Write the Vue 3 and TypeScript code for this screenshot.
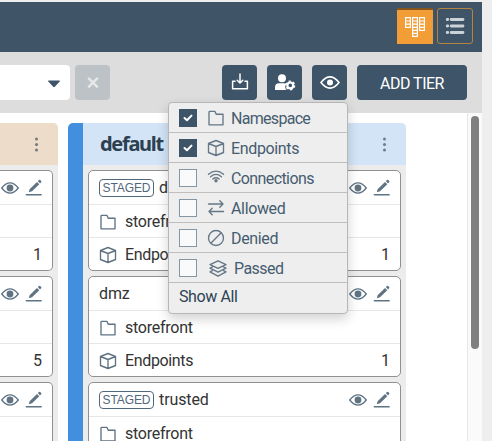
<script setup lang="ts">
import { h, type FunctionalComponent } from 'vue'

type IconName = 'folder' | 'cube' | 'wifi' | 'swap' | 'denied' | 'layers' | 'eye' | 'pencil'

interface Shape {
  d: string
  solid?: boolean
}

const shapes: Record<IconName, Shape[]> = {
  folder: [{ d: 'M2 3.2V15.8H16V5.2H9.2L8 2.4H2.8Q2 2.4 2 3.2Z' }],
  cube: [{ d: 'M9 1.5L16.5 4.5V13.5L9 16.5L1.5 13.5V4.5ZM1.5 4.5L9 7.5L16.5 4.5M9 7.5V16.5' }],
  wifi: [
    { d: 'M1.5 5.3Q9 -1 16.5 5.3M3.6 7.7Q9 3.1 14.4 7.7M5.9 10.1Q9 7.5 12.1 10.1' },
    { d: 'M9 10a1.7 1.7 0 1 1 0 3.4a1.7 1.7 0 1 1 0-3.4Z', solid: true },
  ],
  swap: [{ d: 'M1.5 5H16M12.8 1.7L16 5L12.8 8.3M16.5 12.5H2M5.2 9.3L2 12.5L5.2 15.8' }],
  denied: [{ d: 'M9 1.5a7.5 7.5 0 1 1 0 15a7.5 7.5 0 1 1 0-15ZM3.8 14.2L14.2 3.8' }],
  layers: [
    { d: 'M9 1.8L17 5.6L9 9.4L1 5.6ZM3.4 8L1 9.2L9 13.2L17 9.2L14.6 8M3.4 11.7L1 12.9L9 17.2L17 12.9L14.6 11.7' },
  ],
  eye: [
    { d: 'M0.7 9Q9 -1.2 17.3 9Q9 19.2 0.7 9Z' },
    { d: 'M9 5.6a3.4 3.4 0 1 1 0 6.8a3.4 3.4 0 1 1 0-6.8Z', solid: true },
  ],
  pencil: [
    { d: 'M4.6 10.2L12 2.9L14.3 5.2L7 12.3L3.8 13.3ZM12.8 2.1L14 0.9Q14.6 0.4 15.2 1L16.2 2Q16.7 2.6 16.1 3.2L15 4.4Z', solid: true },
    { d: 'M1.3 15.7H16.2' },
  ],
}

const Glyph: FunctionalComponent<{ name: IconName }> = (props) =>
  h(
    'svg',
    { viewBox: '0 0 18 18', width: 18, height: 18 },
    shapes[props.name].map((s) =>
      h('path', {
        d: s.d,
        fill: s.solid ? 'currentColor' : 'none',
        stroke: s.solid ? 'none' : 'currentColor',
        'stroke-width': 1.35,
        'stroke-linejoin': 'round',
        'stroke-linecap': 'round',
      }),
    ),
  )
Glyph.props = ['name']

interface Policy {
  name: string
  staged: boolean
  count: number
}

const policies: Policy[] = [
  { name: 'dmz', staged: true, count: 1 },
  { name: 'dmz', staged: false, count: 1 },
  { name: 'trusted', staged: true, count: 1 },
]
const neighbourCounts: number[] = [1, 5, 1]

interface Option {
  label: string
  icon: IconName
  checked: boolean
}

const options: Option[] = [
  { label: 'Namespace', icon: 'folder', checked: true },
  { label: 'Endpoints', icon: 'cube', checked: true },
  { label: 'Connections', icon: 'wifi', checked: false },
  { label: 'Allowed', icon: 'swap', checked: false },
  { label: 'Denied', icon: 'denied', checked: false },
  { label: 'Passed', icon: 'layers', checked: false },
]
</script>

<template>
  <div class="page">
    <header class="top">
      <button class="view active">
        <svg width="36" height="36" viewBox="0 0 36 36" fill="none" stroke="#fff" stroke-width="1.2">
          <path d="M8.6 9.6H13.4V19.4H8.6ZM8.6 13H13.4M8.6 16.2H13.4M15.6 9.6H20.4V28.4H15.6ZM15.6 13H20.4M15.6 16.2H20.4M15.6 19.4H20.4M15.6 22.4H20.4M15.6 25.4H20.4M22.6 9.6H27.4V22.4H22.6ZM22.6 13H27.4M22.6 16.2H27.4M22.6 19.4H27.4" />
        </svg>
      </button>
      <button class="view outlined">
        <svg width="34" height="34" viewBox="0 0 34 34" stroke="#ccd3d8" stroke-width="2.8" stroke-linecap="round">
          <path d="M9.2 10.5H9.8M13.2 10.5H25M9.2 17H9.8M13.2 17H25M9.2 23.5H9.8M13.2 23.5H25" />
        </svg>
      </button>
    </header>

    <div class="toolbar">
      <div class="select">
        <svg width="12" height="8" viewBox="0 0 12 8"><path d="M0.3 0.5H11.7V1.5L6.8 6.8Q6 7.5 5.2 6.8L0.3 1.5Z" fill="#3e5468" /></svg>
      </div>
      <button class="tool clear">
        <svg width="12" height="12" viewBox="0 0 12 12" stroke="#e5e7e9" stroke-width="2.6" stroke-linecap="round"><path d="M2 1.7L10 9.7M10 1.7L2 9.7" /></svg>
      </button>
      <div class="tools">
        <button class="tool">
          <svg width="20" height="20" viewBox="0 0 20 20" fill="none" stroke="#fff" stroke-width="1.5" stroke-linecap="round" stroke-linejoin="round">
            <path d="M5 8.2H2.6V15.8H17.4V8.2H15M10 1V9.7M7.2 7.2L10 10L12.8 7.2" />
          </svg>
        </button>
        <button class="tool">
          <svg width="22" height="20" viewBox="0 0 22 20">
            <path d="M8 1.3a4 4 0 1 1 0 8a4 4 0 1 1 0-8ZM1 17V14.5Q1 10.3 5 10.3H10Q12 10.3 12.6 11Q9.8 14 12.5 17Z" fill="#fff" />
            <circle cx="16.3" cy="12.4" r="2.9" fill="none" stroke="#fff" stroke-width="2.2" />
            <circle cx="16.3" cy="12.4" r="4.3" fill="none" stroke="#fff" stroke-width="1.4" stroke-dasharray="2.25 2.25" />
          </svg>
        </button>
        <button class="tool">
          <svg width="20" height="14" viewBox="0 0 20 14">
            <path d="M1 6.5Q10 -4.7 19 6.5Q10 17.7 1 6.5Z" fill="none" stroke="#fff" stroke-width="1.6" />
            <circle cx="10" cy="6.5" r="3" fill="#fff" />
          </svg>
        </button>
        <button class="add">ADD TIER</button>
      </div>
    </div>

    <main class="board">
      <section class="tier previous">
        <div class="column">
          <div class="head"><i class="dots"></i></div>
          <article v-for="(count, i) in neighbourCounts" :key="i" class="card">
            <div class="row title"><span class="actions"><Glyph name="eye" /><Glyph name="pencil" /></span></div>
            <div class="row"></div>
            <div class="row"><span class="count">{{ count }}</span></div>
          </article>
        </div>
      </section>
      <section class="tier current">
        <div class="stripe"></div>
        <div class="column">
          <div class="head"><h2>default</h2><i class="dots"></i></div>
          <article v-for="(policy, i) in policies" :key="i" class="card">
            <div class="row title">
              <span v-if="policy.staged" class="badge">STAGED</span>
              <span class="name">{{ policy.name }}</span>
              <span class="actions"><Glyph name="eye" /><Glyph name="pencil" /></span>
            </div>
            <div class="row"><Glyph name="folder" /><span class="label store">storefront</span></div>
            <div class="row"><Glyph name="cube" /><span class="label">Endpoints</span><span class="count">{{ policy.count }}</span></div>
          </article>
        </div>
      </section>
      <div class="track"><div class="thumb"></div></div>
    </main>

    <div class="menu">
      <div v-for="option in options" :key="option.label" class="option" :class="option.icon">
        <span class="box" :class="{ checked: option.checked }">
          <svg v-if="option.checked" width="10" height="8" viewBox="0 0 10 8" fill="none" stroke="#fff" stroke-width="2" stroke-linecap="round" stroke-linejoin="round"><path d="M1.5 4L4 6.3L8.5 1.6" /></svg>
        </span>
        <Glyph :name="option.icon" />
        <span class="text">{{ option.label }}</span>
      </div>
      <div class="all">Show All</div>
    </div>
  </div>
</template>

<style>
body {
  background: #eee;
  overflow: hidden;
}
</style>

<style scoped>
* {
  box-sizing: border-box;
}
.page {
  position: relative;
  width: 482px;
  height: 441px;
  padding-top: 2px;
  overflow: hidden;
  display: flex;
  flex-direction: column;
  font: 16px/20px Roboto, sans-serif;
  color: #333;
}
svg {
  display: block;
  flex: none;
}
button {
  border: 0;
  padding: 0;
  font: inherit;
  display: flex;
  align-items: center;
  justify-content: center;
}
.top {
  flex: none;
  height: 50px;
  background: #3f5467;
  display: flex;
  justify-content: flex-end;
  gap: 4px;
  padding: 6px 9px 0 0;
}
.view {
  width: 36px;
  height: 36px;
}
.active {
  background: #f29d35;
  box-shadow: inset 0 2px #87551c;
}
.outlined {
  background: transparent;
  border: 1px solid #b5853f;
  border-radius: 3px;
}
.toolbar {
  flex: none;
  height: 61px;
  background: #ddd;
  display: flex;
  align-items: flex-start;
  padding: 13px 15px 0 0;
}
.select {
  width: 70px;
  height: 35px;
  background: #fff;
  border-radius: 0 4px 4px 0;
  display: flex;
  justify-content: flex-end;
  align-items: center;
  padding: 2px 10px 0 0;
}
.tool {
  width: 35px;
  height: 35px;
  border-radius: 4px;
  background: #3e5468;
}
.clear {
  margin-left: 5px;
  background: #bcc2c6;
}
.tools {
  margin-left: auto;
  display: flex;
  gap: 10px;
}
.add {
  width: 110px;
  height: 35px;
  border-radius: 4px;
  background: #3e5468;
  color: #fff;
  padding-top: 3px;
  letter-spacing: -0.5px;
}
.board {
  flex: 1;
  min-height: 0;
  background: #fff;
  display: flex;
}
.tier {
  flex: none;
  height: 340px;
  margin-top: 10px;
  overflow: hidden;
  display: flex;
}
.previous {
  width: 58px;
  border-radius: 0 5px 0 0;
}
.current {
  width: 338px;
  margin-left: 10px;
  border-radius: 5px 5px 0 0;
}
.stripe {
  width: 15px;
  background: #428fdf;
}
.column {
  flex: 1;
  min-width: 0;
  background: #ececec;
}
.head {
  height: 42px;
  margin-bottom: 5px;
  background: #d2e4f6;
  display: flex;
  align-items: center;
  justify-content: space-between;
  padding: 0 20px 0 17px;
}
.previous .head {
  background: #eddcc9;
  justify-content: flex-end;
}
h2 {
  margin: 0;
  font: bold 20px/24px "Noto Sans", sans-serif;
  letter-spacing: -1.3px;
  color: #2d4050;
}
.dots {
  width: 3px;
  height: 3px;
  border-radius: 50%;
  background: #6e7d8b;
  color: #6e7d8b;
  box-shadow: 0 -5.4px, 0 5.4px;
}
.previous .dots {
  background: #717a7d;
  color: #717a7d;
}
.card {
  height: 101px;
  margin: 0 5px 5px;
  border: 1px solid #909090;
  border-radius: 5px;
  background: #fff;
}
.previous .card {
  margin-left: 0;
  border-left: 0;
  border-radius: 0 5px 5px 0;
}
.row {
  height: 33px;
  border-top: 1px solid #e7e7e7;
  display: flex;
  align-items: center;
  padding: 1px 10px 0 10px;
  color: #5f7383;
}
.title {
  border-top: 0;
  padding-right: 9px;
}
.previous .row {
  padding-left: 0;
}
.badge {
  width: 55px;
  height: 18px;
  margin-right: 5px;
  border: 1px solid #51687a;
  border-radius: 4px;
  color: #52687a;
  font: 12px/17px "Liberation Sans", Arial, sans-serif;
  letter-spacing: -0.1px;
  text-align: center;
}
.name,
.label,
.count {
  padding-top: 1px;
  color: #333;
}
.name {
  padding-top: 0;
  letter-spacing: -0.1px;
}
.label {
  margin-left: 8px;
  letter-spacing: -0.35px;
}
.store {
  letter-spacing: -0.25px;
}
.actions {
  display: flex;
  gap: 6px;
  margin-left: auto;
}
.count {
  margin-left: auto;
}
.track {
  width: 15px;
  margin-left: auto;
  padding: 3px 3px 0;
  border-left: 1px solid #e7e7e7;
  background: #fafafa;
}
.thumb {
  width: 8px;
  height: 233px;
  border-radius: 4px;
  background: #808080;
}
.menu {
  position: absolute;
  left: 168px;
  top: 102px;
  width: 180px;
  height: 212px;
  border: 1px solid #b7b7b7;
  border-radius: 4px;
  background: #eee;
  box-shadow: 0 5px 12px rgba(0, 0, 0, 0.18);
}
.option {
  height: 30px;
  border-bottom: 1px solid #bebebe;
  display: flex;
  align-items: center;
  padding: 1px 0 0 10px;
  color: #657786;
}
.box {
  width: 18px;
  height: 18px;
  margin-right: 10px;
  border: 1px solid #8496a4;
  background: #fafafa;
  display: flex;
  align-items: center;
  justify-content: center;
}
.checked {
  background: #3e5468;
  border-color: #3e5468;
}
.text {
  margin-left: 6px;
  padding-top: 2px;
  color: #465c6f;
  letter-spacing: -0.35px;
}
.folder .text {
  letter-spacing: -0.7px;
}
.wifi .text {
  letter-spacing: -0.6px;
}
.layers svg {
  margin-left: 2px;
}
.layers .text {
  margin-left: 7px;
  letter-spacing: -0.55px;
}
.all {
  padding: 4px 10px;
  color: #2d4354;
  letter-spacing: -0.4px;
}
</style>
